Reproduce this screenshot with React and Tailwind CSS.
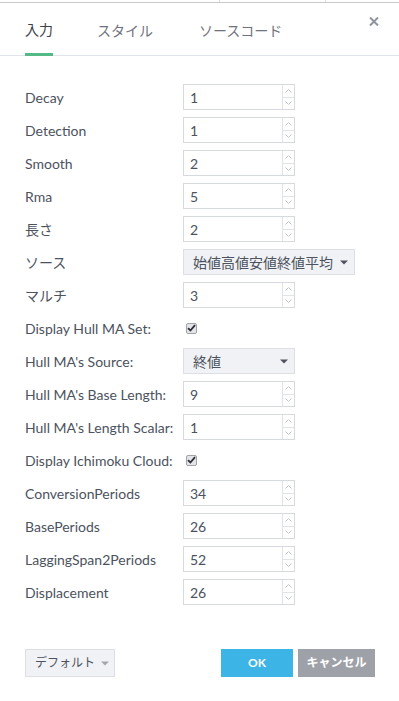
import React from 'react';

const font = { fontFamily: 'Lato, "Noto Sans CJK JP", sans-serif' };

const rows = [
  { label: 'Decay', type: 'num', value: '1' },
  { label: 'Detection', type: 'num', value: '1' },
  { label: 'Smooth', type: 'num', value: '2' },
  { label: 'Rma', type: 'num', value: '5' },
  { label: '長さ', type: 'num', value: '2' },
  { label: 'ソース', type: 'wideSelect', value: '始値高値安値終値平均' },
  { label: 'マルチ', type: 'num', value: '3' },
  { label: 'Display Hull MA Set:', type: 'check' },
  { label: "Hull MA's Source:", type: 'select', value: '終値' },
  { label: "Hull MA's Base Length:", type: 'num', value: '9' },
  { label: "Hull MA's Length Scalar:", type: 'num', value: '1' },
  { label: 'Display Ichimoku Cloud:', type: 'check' },
  { label: 'ConversionPeriods', type: 'num', value: '34' },
  { label: 'BasePeriods', type: 'num', value: '26' },
  { label: 'LaggingSpan2Periods', type: 'num', value: '52' },
  { label: 'Displacement', type: 'num', value: '26' },
];

const Caret = ({ className }) => (
  <svg width="8" height="5" viewBox="0 0 8 5" className={className}>
    <path d="M0 0.5h8L4 4.5z" fill="currentColor" />
  </svg>
);

const NumberInput = ({ value }) => (
  <div className="flex w-[112px] h-[26px] border border-[#d6d9de] bg-white">
    <div className="flex-1 flex items-center pl-[6px] text-[14px] text-[#4c525e]">{value}</div>
    <div className="w-[12px] flex flex-col border-l border-[#e0e3e8]">
      <div className="flex-1 flex items-center justify-center border-b border-[#e0e3e8]">
        <svg width="7" height="4" viewBox="0 0 7 4">
          <path d="M0.5 3.5L3.5 0.5L6.5 3.5" fill="none" stroke="#c3c8cf" strokeWidth="1" />
        </svg>
      </div>
      <div className="flex-1 flex items-center justify-center">
        <svg width="7" height="4" viewBox="0 0 7 4">
          <path d="M0.5 0.5L3.5 3.5L6.5 0.5" fill="none" stroke="#c3c8cf" strokeWidth="1" />
        </svg>
      </div>
    </div>
  </div>
);

const Select = ({ value, wide }) => (
  <div
    className={`flex items-center justify-between h-[26px] border border-[#dcdfe3] bg-[#f1f2f5] pl-[9px] pr-[6px] text-[14px] text-[#4c525e] ${
      wide ? 'w-[172px]' : 'w-[112px]'
    }`}
  >
    <span className="whitespace-nowrap">{value}</span>
    <Caret className="text-[#50535e]" />
  </div>
);

const Checkbox = () => (
  <div className="ml-[3px] w-[11px] h-[11px] rounded-[2px] border border-[#a0a3a8] bg-[#e4e5e8] flex items-center justify-center">
    <svg width="9" height="8" viewBox="0 0 9 8">
      <path d="M1 4.2L3.4 6.5L8 1.2" fill="none" stroke="#2c2e33" strokeWidth="1.8" />
    </svg>
  </div>
);

export default function App() {
  return (
    <div className="w-[399px] h-[701px] bg-white flex flex-col" style={font}>
      {/* top strip */}
      <div className="flex h-[2px]">
        <div className="w-[220px] border-r border-[#dcdcdc]" />
        <div className="w-[106px] border-r border-[#dcdcdc]" />
      </div>
      <div className="h-px bg-[#c9c9c9]" />

      {/* Tabs */}
      <div className="relative h-[53px] border-b border-[#e0e3eb] flex px-[25px] text-[14px]">
        <div className="-mb-px flex items-center border-b-[3px] border-[#53b987] text-[#3e4149] pt-[3px]">
          入力
        </div>
        <div className="ml-[44px] flex items-center text-[#6f737d] pt-[3px]">スタイル</div>
        <div className="ml-[46px] flex items-center text-[#6f737d] pt-[3px]">ソースコード</div>
        <button className="absolute right-[20px] top-[13px] w-[10px] h-[10px] flex items-center justify-center">
          <svg width="10" height="9" viewBox="0 0 10 9">
            <path d="M1 0.5L9 8.5M9 0.5L1 8.5" stroke="#8f939c" strokeWidth="2" />
          </svg>
        </button>
      </div>

      {/* Form */}
      <div className="flex flex-col gap-[7px] pt-[28px] px-[25px]">
        {rows.map((r) => (
          <div key={r.label} className="flex items-center h-[26px]">
            <div className="w-[158px] text-[14px] text-[#4c525e] whitespace-nowrap">{r.label}</div>
            {r.type === 'num' && <NumberInput value={r.value} />}
            {r.type === 'wideSelect' && <Select value={r.value} wide />}
            {r.type === 'select' && <Select value={r.value} />}
            {r.type === 'check' && <Checkbox />}
          </div>
        ))}
      </div>

      {/* Footer */}
      <div className="mt-[44px] flex items-center justify-between pl-[25px] pr-[24px]">
        <button className="flex items-center gap-[6px] h-[28px] w-[90px] pl-[9px] border border-[#dcdfe3] bg-[#f1f2f5] text-[12px] text-[#4c525e] whitespace-nowrap">
          デフォルト
          <Caret className="text-[#a3a6ad]" />
        </button>
        <div className="flex gap-[5px]">
          <button className="h-[28px] w-[72px] bg-[#3cb4e5] text-white text-[12px] font-bold">OK</button>
          <button className="h-[28px] w-[77px] bg-[#9ea1a7] text-white text-[12px] font-bold whitespace-nowrap">
            キャンセル
          </button>
        </div>
      </div>
    </div>
  );
}
